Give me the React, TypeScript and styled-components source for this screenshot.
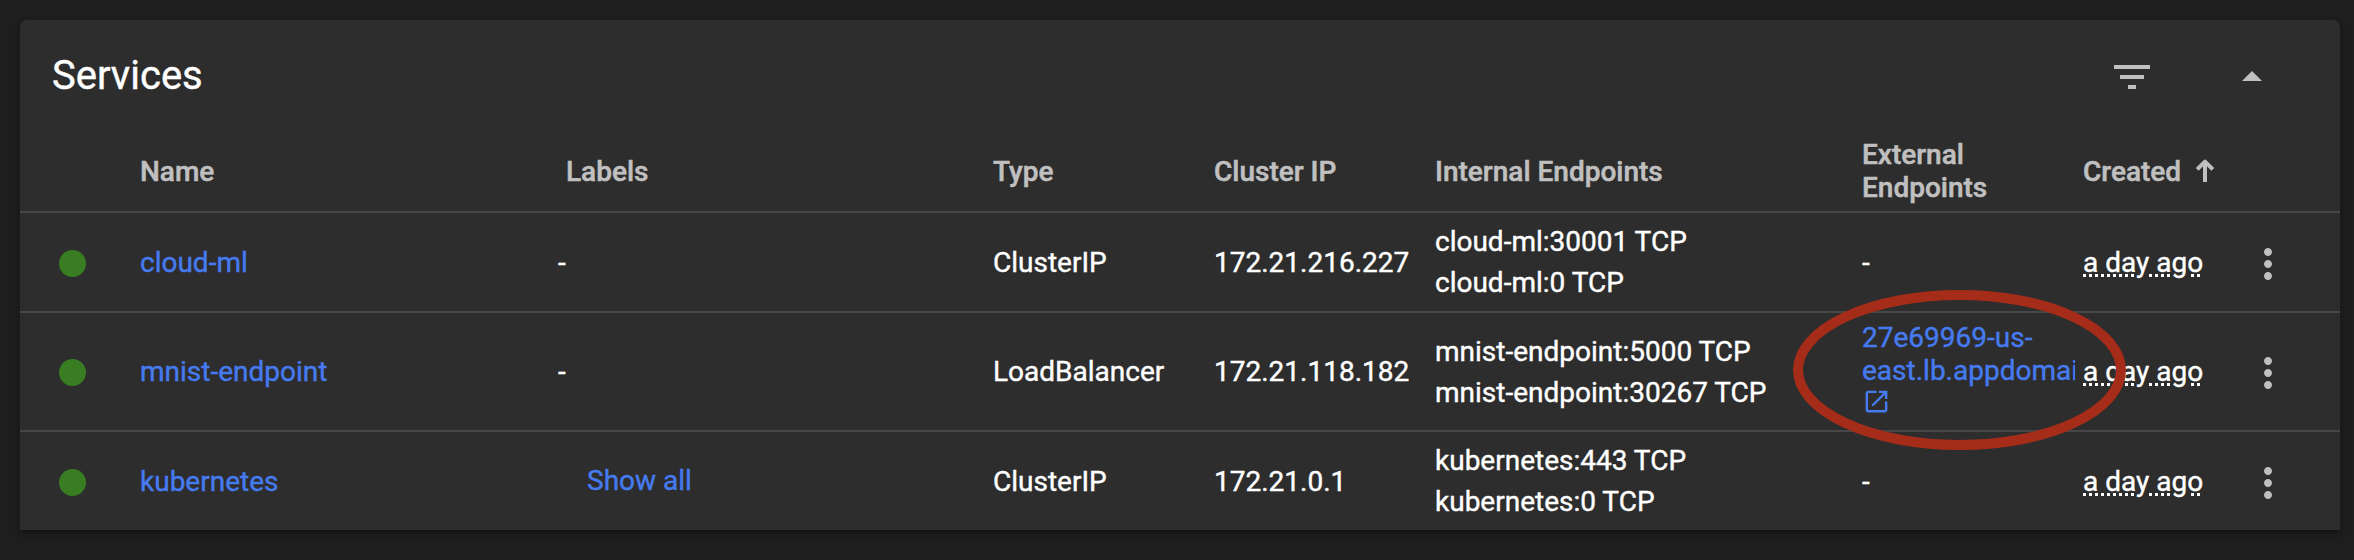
import React from 'react';
import styled, { createGlobalStyle } from 'styled-components';

const GlobalStyle = createGlobalStyle`
  * { box-sizing: border-box; }
  body {
    margin: 0;
    background: #1e1e1e;
    color: #fff;
    font-family: Roboto, sans-serif;
    font-size: 28px;
    line-height: 33px;
    -webkit-text-stroke: 0.4px currentColor;
  }
`;

const Page = styled.main`
  height: 560px;
  padding: 20px 14px 30px 20px;
  overflow: hidden;
`;

const Card = styled.section`
  position: relative;
  height: 510px;
  background: #2d2d2d;
  border-radius: 8px 8px 0 0;
  box-shadow: 0 6px 2px -4px rgba(0, 0, 0, 0.2), 0 4px 4px rgba(0, 0, 0, 0.14), 0 2px 10px rgba(0, 0, 0, 0.12);
`;

const CardHeader = styled.header`
  display: flex;
  align-items: center;
  height: 114px;
  padding: 0 64px 0 32px;
`;

const Title = styled.h2`
  flex: 1;
  margin: 0;
  font-size: 40px;
  font-weight: 400;
  line-height: 48px;
  padding-bottom: 3px;
`;

const HeaderButtons = styled.div`
  display: flex;
  gap: 72px;
`;

const IconButton = styled.button`
  display: flex;
  padding: 0;
  border: 0;
  background: none;
  color: #c0c0c0;
`;

const MenuButton = styled(IconButton)`
  padding-top: 3px;
`;

const Row = styled.div<{ $height: number; $last?: boolean }>`
  display: grid;
  grid-template-columns: 88px 426px 427px 221px 221px 427px 221px 161px 48px;
  align-items: center;
  height: ${(p) => p.$height}px;
  padding-left: 32px;
  border-bottom: ${(p) => (p.$last ? '0' : '2px solid #474747')};
`;

const HeadCell = styled.div`
  display: flex;
  align-items: center;
  color: #c0c0c0;
  font-weight: 500;
  padding-bottom: 3px;
  -webkit-text-stroke-width: 0.5px;
`;

const Cell = styled.div`
  white-space: nowrap;
`;

const LabelsCell = styled(Cell)<{ $chips: boolean }>`
  padding-left: ${(p) => (p.$chips ? 21 : 0)}px;
  padding-bottom: ${(p) => (p.$chips ? 2 : 0)}px;
  margin-left: ${(p) => (p.$chips ? 0 : -8)}px;
`;

const Link = styled.a`
  color: #467bf0;
`;

const Status = styled.span`
  display: block;
  width: 27px;
  height: 27px;
  margin: 2px 0 0 6.5px;
  border-radius: 50%;
  background: #387d22;
`;

const Endpoint = styled.div`
  line-height: 41px;
`;

const ExternalCell = styled(Cell)`
  width: 213px;
  overflow: hidden;
  line-height: 33px;
`;

const ExternalLink = styled(Link)`
  display: block;
  padding-bottom: 6px;
`;

const ExternalIcon = styled.svg`
  display: block;
`;

const Age = styled.span`
  text-decoration: underline dotted 3px;
  text-underline-offset: 2px;
`;

const Highlight = styled.svg`
  position: absolute;
  left: 1773px;
  top: 270px;
  pointer-events: none;
`;

const SortArrow = styled.svg`
  margin-left: 14px;
`;

const FilterIcon = () => (
  <svg width="48" height="48" viewBox="0 0 24 24" fill="currentColor">
    <path d="M10 18h4v-2h-4v2zM3 6v2h18V6H3zm3 7h12v-2H6v2z" />
  </svg>
);

const CollapseIcon = () => (
  <svg width="48" height="48" viewBox="0 0 24 24" fill="currentColor">
    <path d="M7 14l5-5 5 5z" />
  </svg>
);

const MenuIcon = () => (
  <svg width="48" height="48" viewBox="0 0 24 24" fill="currentColor">
    <path d="M12 8c1.1 0 2-.9 2-2s-.9-2-2-2-2 .9-2 2 .9 2 2 2zm0 2c-1.1 0-2 .9-2 2s.9 2 2 2 2-.9 2-2-.9-2-2-2zm0 6c-1.1 0-2 .9-2 2s.9 2 2 2 2-.9 2-2-.9-2-2-2z" />
  </svg>
);

type Service = {
  name: string;
  labels?: string;
  type: string;
  ip: string;
  internal: string[];
  external?: string[];
  height: number;
};

const services: Service[] = [
  { name: 'cloud-ml', type: 'ClusterIP', ip: '172.21.216.227', internal: ['cloud-ml:30001 TCP', 'cloud-ml:0 TCP'], height: 100 },
  {
    name: 'mnist-endpoint',
    type: 'LoadBalancer',
    ip: '172.21.118.182',
    internal: ['mnist-endpoint:5000 TCP', 'mnist-endpoint:30267 TCP'],
    external: ['27e69969-us-', 'east.lb.appdomai'],
    height: 119,
  },
  { name: 'kubernetes', labels: 'Show all', type: 'ClusterIP', ip: '172.21.0.1', internal: ['kubernetes:443 TCP', 'kubernetes:0 TCP'], height: 98 },
];

export default function App() {
  return (
    <>
      <GlobalStyle />
      <Page>
        <Card>
          <CardHeader>
            <Title>Services</Title>
            <HeaderButtons>
              <IconButton><FilterIcon /></IconButton>
              <IconButton><CollapseIcon /></IconButton>
            </HeaderButtons>
          </CardHeader>
          <Row $height={79}>
            <HeadCell />
            <HeadCell>Name</HeadCell>
            <HeadCell>Labels</HeadCell>
            <HeadCell>Type</HeadCell>
            <HeadCell>Cluster IP</HeadCell>
            <HeadCell>Internal Endpoints</HeadCell>
            <HeadCell>External<br />Endpoints</HeadCell>
            <HeadCell>
              Created
              <SortArrow width="20" height="24" viewBox="0 0 20 24" fill="none" stroke="currentColor" strokeWidth="4">
                <path d="M10 23V3" />
                <path d="M2.2 10.4L10 2.6l7.8 7.8" strokeLinejoin="round" />
              </SortArrow>
            </HeadCell>
          </Row>
          {services.map((s, i) => (
            <Row key={s.name} $height={s.height} $last={i === services.length - 1}>
              <Status />
              <Cell><Link>{s.name}</Link></Cell>
              <LabelsCell $chips={!!s.labels}>{s.labels ? <Link>{s.labels}</Link> : '-'}</LabelsCell>
              <Cell>{s.type}</Cell>
              <Cell>{s.ip}</Cell>
              <Cell>{s.internal.map((e) => <Endpoint key={e}>{e}</Endpoint>)}</Cell>
              <ExternalCell>
                {s.external ? (
                  <ExternalLink>
                    {s.external[0]}<br />{s.external[1]}
                    <ExternalIcon width="29" height="29" viewBox="0 0 24 24" fill="currentColor">
                      <path d="M19 19H5V5h7V3H5c-1.11 0-2 .9-2 2v14c0 1.1.89 2 2 2h14c1.1 0 2-.9 2-2v-7h-2v7zM14 3v2h3.59l-9.83 9.83 1.41 1.41L19 6.41V10h2V3h-7z" />
                    </ExternalIcon>
                  </ExternalLink>
                ) : '-'}
              </ExternalCell>
              <Cell><Age>a day ago</Age></Cell>
              <MenuButton><MenuIcon /></MenuButton>
            </Row>
          ))}
          <Highlight width="333" height="160" viewBox="0 0 333 160" fill="none">
            <ellipse cx="166.5" cy="80" rx="161.5" ry="75" stroke="#a52c18" strokeWidth="10" />
          </Highlight>
        </Card>
      </Page>
    </>
  );
}
